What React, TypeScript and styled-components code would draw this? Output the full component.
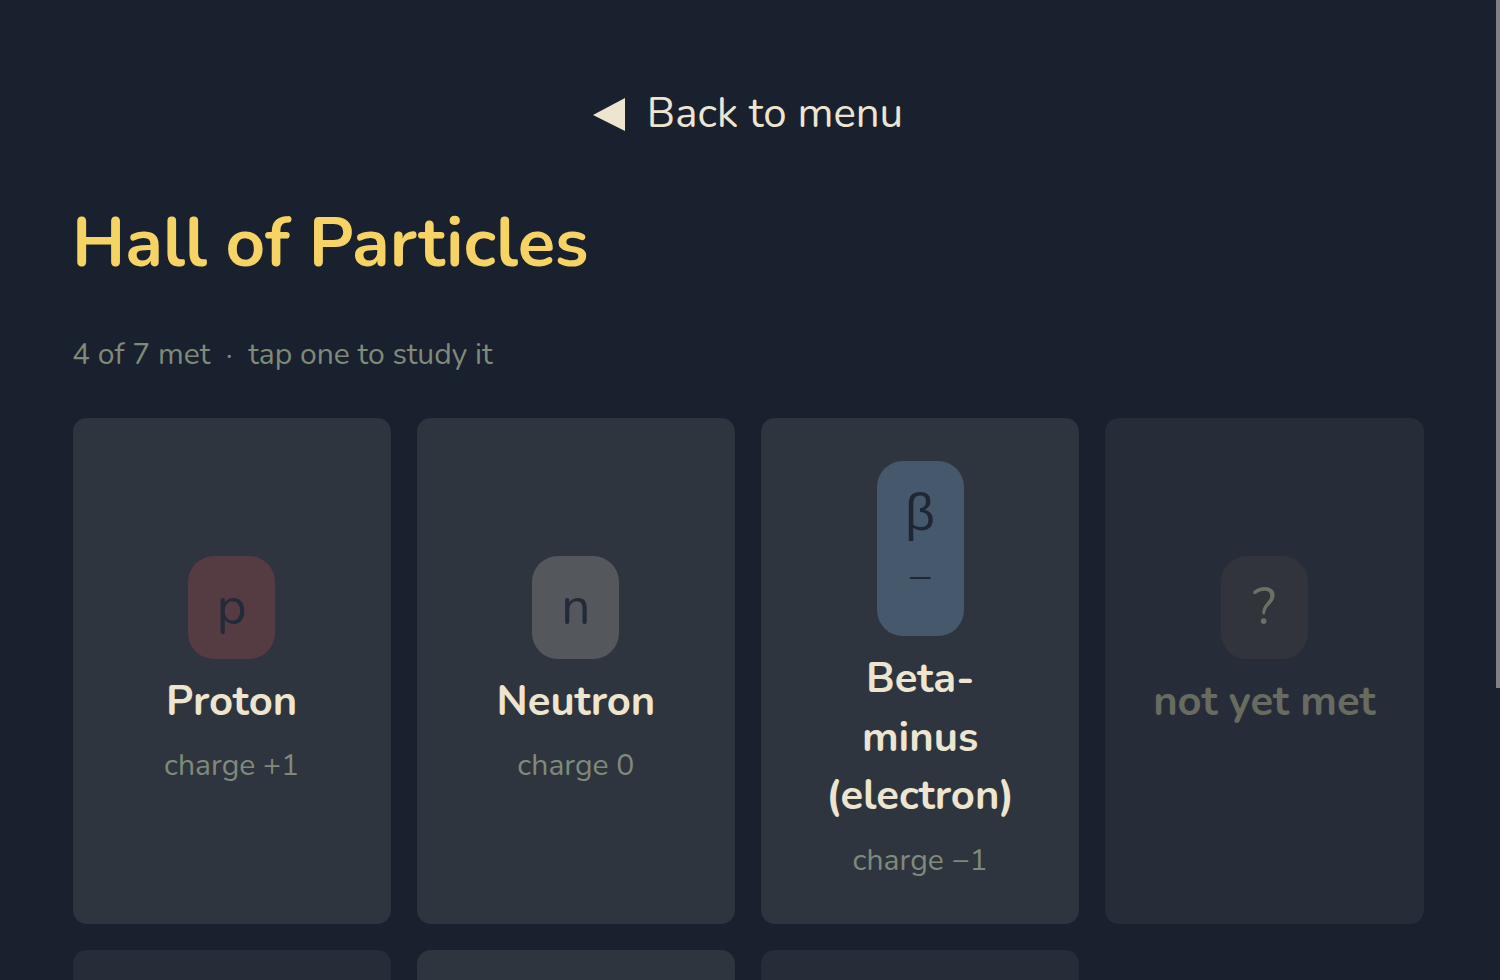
import styled, { createGlobalStyle } from 'styled-components';

interface Particle {
  symbol: string;
  sign?: string;
  name: string;
  charge?: string;
  tone: string;
  ink: string;
  locked?: boolean;
}

const locked: Particle = {
  symbol: '?',
  name: 'not yet met',
  tone: '#32343c',
  ink: '#6d7165',
  locked: true,
};

const particles: Particle[] = [
  { symbol: 'p', name: 'Proton', charge: 'charge +1', tone: '#543c42', ink: '#232a38' },
  { symbol: 'n', name: 'Neutron', charge: 'charge 0', tone: '#54585c', ink: '#232a38' },
  { symbol: 'β', sign: '−', name: 'Beta-minus (electron)', charge: 'charge −1', tone: '#46586b', ink: '#1f2735' },
  locked,
  locked,
  { symbol: 'γ', name: 'Gamma', charge: 'charge 0', tone: '#54523c', ink: '#232a38' },
  locked,
];

const GlobalStyle = createGlobalStyle`
  html, body {
    margin: 0;
    background: #19202e;
    scrollbar-width: none;
  }
  body {
    font-family: 'Nunito', sans-serif;
    color: #ede5d0;
  }
`;

const ScrollThumb = styled.div`
  position: fixed;
  top: 0;
  right: 0;
  width: 4px;
  height: 688px;
  background: #808080;
`;

const Page = styled.div`
  box-sizing: border-box;
  width: 1496px;
  height: 1396px;
  padding: 74px 72px 0;
  display: flex;
  flex-direction: column;
`;

const BackButton = styled.button`
  align-self: center;
  border: none;
  background: none;
  color: #ede5d0;
  font: inherit;
  font-size: 42px;
  line-height: 80px;
  padding: 0;
  display: flex;
  align-items: center;
  gap: 22px;
  cursor: pointer;
`;

const Title = styled.h1`
  margin: 43px 0 0;
  color: #f6d365;
  font-size: 68.9px;
  font-weight: 700;
  line-height: 92px;
`;

const Subtitle = styled.p`
  margin: 46px 0 0;
  color: #7f8a78;
  font-size: 30.1px;
  line-height: 40px;
`;

const Grid = styled.div`
  margin: 43px 0.5px 0;
  display: grid;
  grid-template-columns: repeat(4, minmax(0, 1fr));
  gap: 26px;
`;

const Card = styled.div<{ $locked?: boolean }>`
  background: ${(p) => (p.$locked ? '#272d38' : '#2e353f')};
  border-radius: 14px;
  padding: 43px 50px 42.5px;
  display: flex;
  flex-direction: column;
  align-items: center;
  justify-content: center;
  text-align: center;
`;

const Badge = styled.div<{ $tone: string; $ink: string }>`
  box-sizing: border-box;
  width: 87px;
  border-radius: 26px;
  padding: 15.5px 22px;
  background: ${(p) => p.$tone};
  color: ${(p) => p.$ink};
  font-size: 51.4px;
  line-height: 72px;
  word-break: break-all;
`;

const Sign = styled.span`
  font-size: 42px;
  font-weight: 300;
  line-height: 0;
  vertical-align: 12px;
`;

const Name = styled.div<{ $locked?: boolean }>`
  margin-top: 14px;
  font-size: 41.8px;
  line-height: 58.5px;
  font-weight: 700;
  color: ${(p) => (p.$locked ? '#686c60' : '#ede5d0')};
  white-space: ${(p) => (p.$locked ? 'nowrap' : 'normal')};
`;

const Charge = styled.div`
  margin-top: 14px;
  color: #7f8a78;
  font-size: 30.1px;
  line-height: 42px;
`;

const App = () => (
  <>
    <GlobalStyle />
    <ScrollThumb />
    <Page>
      <BackButton>
        <svg width="32" height="33" viewBox="0 0 32 33" aria-hidden="true">
          <path d="M0 17 L32 0 V33 Z" fill="#ede5d0" />
        </svg>
        Back to menu
      </BackButton>
      <Title>Hall of Particles</Title>
      <Subtitle>4 of 7 met &nbsp;·&nbsp; tap one to study it</Subtitle>
      <Grid>
        {particles.map((item, index) => (
          <Card key={index} $locked={item.locked}>
            <Badge $tone={item.tone} $ink={item.ink}>
              {item.symbol}
              {item.sign && <Sign>{item.sign}</Sign>}
            </Badge>
            <Name $locked={item.locked}>{item.name}</Name>
            <Charge>{item.charge ?? '\u00a0'}</Charge>
          </Card>
        ))}
      </Grid>
    </Page>
  </>
);

export default App;
